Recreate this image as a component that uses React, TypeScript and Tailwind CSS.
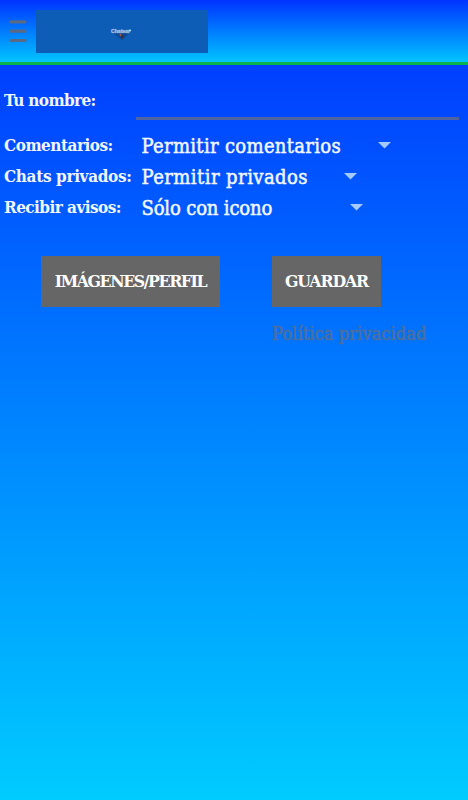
import React from 'react';

const fields = [
  {
    label: 'Comentarios:',
    labelClass: 'tracking-[-0.5px]',
    value: 'Permitir comentarios',
    valueClass: 'tracking-[0.32px]',
    selectClass: 'w-[249px]',
  },
  {
    label: 'Chats privados:',
    labelClass: 'tracking-[-0.35px]',
    value: 'Permitir privados',
    valueClass: 'tracking-[0.45px]',
    selectClass: 'w-[215px]',
  },
  {
    label: 'Recibir avisos:',
    labelClass: 'tracking-[-0.55px]',
    value: 'Sólo con icono',
    valueClass: 'tracking-[-0.15px]',
    selectClass: 'w-[221px]',
  },
];

const Logo: React.FC = () => (
  <svg width="172" height="43" viewBox="0 0 172 43" className="block">
    <rect width="172" height="43" fill="#0d5cb6" />
    <path d="M77 23h17l-5 4-3 3-4-3z" fill="#0a3f80" opacity="0.6" />
    <text
      x="75"
      y="23"
      fontFamily="Liberation Sans, sans-serif"
      fontSize="5.5"
      fontWeight="bold"
      textLength="19"
      lengthAdjust="spacingAndGlyphs"
      fill="#c4daf0"
      stroke="#8fb3dc"
      strokeWidth="0.4"
    >
      Chatear
    </text>
    <path d="M83 24l3 0 2 3-2 2z" fill="#3c3040" />
    <circle cx="84.5" cy="25" r="1" fill="#a8605a" />
    <circle cx="94" cy="20.5" r="1" fill="#a6f0dc" />
  </svg>
);

const Header: React.FC = () => (
  <header className="flex h-[65px] items-start border-b-3 border-[#0bb34c] bg-linear-to-b/srgb from-[#0033ff] to-[#00c4ff] pt-[9.5px] pl-[9px]">
    <button type="button" aria-label="Menú" className="mt-[10.5px] mr-[9px]">
      <svg width="18" height="23" viewBox="0 0 18 23" className="block" stroke="#5a6a85" strokeWidth="3.2" strokeLinecap="round">
        <path d="M2 1.8h14M2 11.1h14M2 20.5h14" />
      </svg>
    </button>
    <Logo />
  </header>
);

const App: React.FC = () => {
  return (
    <div className="min-h-screen bg-linear-to-b/srgb from-[#0033ff] to-[#00ccff] font-['DejaVu_Serif_Condensed','DejaVu_Serif',serif] font-stretch-condensed text-[#f2f6ff]">
      <Header />

      <main className="pl-[4px]">
        {/* Name */}
        <div className="flex h-[55px] items-start">
          <label htmlFor="nombre" className="w-[132px] pt-[24px] text-[17px] leading-[22px] font-bold whitespace-nowrap tracking-[-0.63px]">
            Tu nombre:
          </label>
          <input id="nombre" className="h-[55px] w-[323px] border-b-3 border-[#4f64a0] bg-transparent px-1 text-lg outline-none" />
        </div>

        {/* Options */}
        <div className="mt-[10.5px]">
          {fields.map((field) => (
            <div key={field.label} className="flex h-[31px] items-center">
              <span className={`w-[137.5px] text-[17px] font-bold whitespace-nowrap ${field.labelClass}`}>{field.label}</span>
              <div className={`flex items-center justify-between ${field.selectClass}`}>
                <span className={`text-[20px] whitespace-nowrap [-webkit-text-stroke:0.5px_#f2f6ff] ${field.valueClass}`}>{field.value}</span>
                <svg width="13" height="7" viewBox="0 0 13 7" className="mt-[-1px] shrink-0">
                  <path d="M0 0h13L6.5 6.5z" fill="#a5caff" />
                </svg>
              </div>
            </div>
          ))}
        </div>

        {/* Actions */}
        <div className="mt-[32px] flex gap-[52px] pl-[37px]">
          <button type="button" className="h-[51px] w-[179px] bg-[#666666] pt-px text-[17.5px] font-bold whitespace-nowrap text-white tracking-[-1.4px]">
            IMÁGENES/PERFIL
          </button>
          <button type="button" className="h-[51px] w-[109px] bg-[#666666] pt-px text-[17.5px] font-bold whitespace-nowrap text-white tracking-[-1.1px]">
            GUARDAR
          </button>
        </div>
        <a href="#privacidad" className="mt-[15px] ml-[268px] block text-[18px] leading-[24px] whitespace-nowrap text-[#4a6f9f] tracking-[0.1px] [-webkit-text-stroke:0.7px_#4a6f9f]">
          Política privacidad
        </a>
      </main>
    </div>
  );
};

export default App;
